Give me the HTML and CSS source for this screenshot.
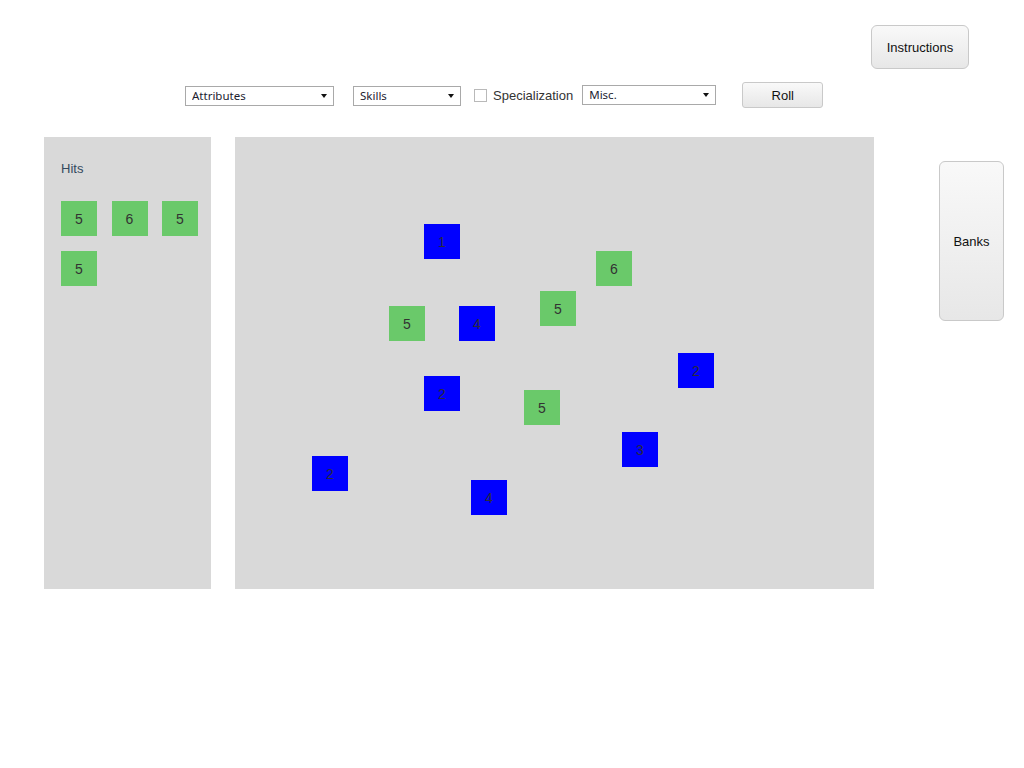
FILE: index.html
```html
<!DOCTYPE html>
<html lang="en">
<head>
<meta charset="utf-8">
<title>Dice Roller</title>
<link rel="stylesheet" href="styles.css">
</head>
<body>
<header class="topbar">
  <button class="btn btn-instructions">Instructions</button>
</header>
<div class="toolbar">
  <span class="select-wrap sel-attr"><select class="select"><option>Attributes</option></select></span>
  <span class="select-wrap sel-skills"><select class="select"><option>Skills</option></select></span>
  <label class="spec"><span class="checkbox"></span><span class="spec-text">Specialization</span></label>
  <span class="select-wrap sel-misc"><select class="select"><option>Misc.</option></select></span>
  <button class="btn btn-roll">Roll</button>
</div>
<main class="content">
  <section class="hits-panel">
    <div class="hits-label">Hits</div>
    <div class="hits-grid">
      <div class="die hit">5</div>
      <div class="die hit">6</div>
      <div class="die hit">5</div>
      <div class="die hit">5</div>
    </div>
  </section>
  <section class="board">
    <div class="die miss" style="left:189px;top:87px">1</div>
    <div class="die hit" style="left:361px;top:114px">6</div>
    <div class="die hit" style="left:154px;top:169px">5</div>
    <div class="die miss" style="left:224px;top:169px">4</div>
    <div class="die hit" style="left:305px;top:154px">5</div>
    <div class="die miss" style="left:443px;top:216px">2</div>
    <div class="die miss" style="left:189px;top:239px">2</div>
    <div class="die hit" style="left:289px;top:253px">5</div>
    <div class="die miss" style="left:387px;top:295px">3</div>
    <div class="die miss" style="left:77px;top:319px">2</div>
    <div class="die miss" style="left:236px;top:343px">4</div>
  </section>
  <button class="btn btn-banks">Banks</button>
</main>
</body>
</html>
```

FILE: styles.css
```css
html, body {
  margin: 0;
  padding: 0;
  background: #ffffff;
  font-family: "Liberation Sans", Arial, sans-serif;
  color: #222;
}

.topbar {
  display: flex;
  justify-content: flex-end;
  padding: 25px 55px 0 0;
  height: 44px;
}

.btn {
  font-family: "Liberation Sans", Arial, sans-serif;
  font-size: 13px;
  color: #111;
  background: linear-gradient(#f9f9f9, #e7e7e7);
  border: 1px solid #c9c9c9;
  border-radius: 6px;
  padding: 0;
  box-sizing: border-box;
  cursor: pointer;
}

.btn-instructions {
  width: 98px;
  height: 44px;
}

.toolbar {
  display: flex;
  align-items: center;
  margin-top: 13px;
  padding-left: 185px;
  height: 26px;
}

.select-wrap {
  position: relative;
  display: inline-block;
  height: 20px;
}

.select-wrap::after {
  content: "";
  position: absolute;
  right: 7px;
  top: 8px;
  border-left: 3.5px solid transparent;
  border-right: 3.5px solid transparent;
  border-top: 4px solid #111;
  pointer-events: none;
}

.select {
  appearance: none;
  -webkit-appearance: none;
  width: 100%;
  height: 20px;
  box-sizing: border-box;
  border: 1px solid #a9a9a9;
  border-radius: 0;
  background: #fff;
  font-family: "Noto Sans", "Open Sans", sans-serif;
  font-size: 11.5px;
  color: #1c2230;
  padding: 0 0 0 6px;
  line-height: 18px;
  outline: none;
}

.sel-attr { width: 149px; margin-top: 1px; }
.sel-skills { width: 108px; margin-left: 19px; margin-top: 1px; }
.sel-misc { width: 134px; margin-left: 9px; }

.spec {
  display: flex;
  align-items: center;
  margin-left: 13px;
}

.checkbox {
  width: 13px;
  height: 13px;
  box-sizing: border-box;
  border: 1px solid #b9b9b9;
  background: #fff;
  margin-top: 1px;
}

.spec-text {
  margin-left: 6px;
  font-size: 13px;
  color: #333;
}

.btn-roll {
  width: 81px;
  height: 26px;
  margin-left: 26px;
  border-radius: 3px;
}

.content {
  display: flex;
  align-items: flex-start;
  margin-top: 29px;
  padding-left: 44px;
}

.hits-panel {
  width: 167px;
  height: 452px;
  box-sizing: border-box;
  background: #d9d9d9;
  padding: 24px 0 0 17px;
}

.hits-label {
  font-size: 13px;
  line-height: 15px;
  color: #34495e;
}

.hits-grid {
  display: grid;
  grid-template-columns: repeat(3, 36px);
  column-gap: 14.5px;
  row-gap: 15px;
  margin-top: 25px;
}

.board {
  position: relative;
  width: 639px;
  height: 452px;
  margin-left: 24px;
  background: #d9d9d9;
}

.die {
  width: 36px;
  height: 35px;
  display: flex;
  align-items: center;
  justify-content: center;
  font-size: 14px;
  color: #333;
}

.board .die {
  position: absolute;
}

.hit { background: #6ac96a; }
.miss { background: #0000ff; color: #2a2a3a; }

.btn-banks {
  width: 65px;
  height: 160px;
  margin-left: 65px;
  margin-top: 24px;
}
```
